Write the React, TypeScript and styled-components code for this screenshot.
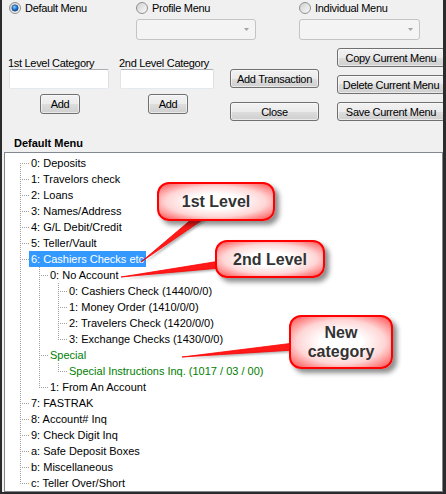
import React from "react";
import styled, { createGlobalStyle } from "styled-components";

const GlobalStyle = createGlobalStyle`
  html, body { margin: 0; padding: 0; background: #fff; }
  * { box-sizing: border-box; }
`;

const Window = styled.div`
  position: relative;
  width: 446px;
  height: 494px;
  background: #f0f0f0;
  border-left: 2px solid #2b2b2b;
  border-right: 3px solid #2b2b2b;
  border-bottom: 2px solid #2b2b2b;
  overflow: hidden;
  font-family: "Liberation Sans", Arial, sans-serif;
  font-size: 11px;
  color: #000;
  display: flex;
  flex-direction: column;
`;

const RadioRow = styled.div`
  display: flex;
  height: 16px;
  padding-left: 7px;
`;

const RadioItem = styled.div<{ $w?: number }>`
  display: flex;
  align-items: center;
  gap: 4px;
  width: ${(p) => (p.$w ? `${p.$w}px` : "auto")};
  letter-spacing: -0.3px;
  line-height: 16px;
  svg { flex-shrink: 0; }
`;

const ComboRow = styled.div`
  display: flex;
  gap: 43px;
  margin-top: 3px;
  padding-left: 134px;
`;

const Combo = styled.div<{ $w: number }>`
  width: ${(p) => p.$w}px;
  height: 21px;
  border: 1px solid #c4c4c4;
  border-radius: 3px;
  background: #f4f4f4;
  display: flex;
  align-items: center;
  justify-content: flex-end;
  padding-right: 6px;
`;

const Lower = styled.div`
  display: flex;
  margin-top: 8px;
  height: 73px;
  padding-left: 6px;
`;

const Column = styled.div<{ $w?: number; $top?: number; $gap?: number }>`
  display: flex;
  flex-direction: column;
  align-items: flex-start;
  width: ${(p) => (p.$w ? `${p.$w}px` : "auto")};
  flex-shrink: 0;
  padding-top: ${(p) => p.$top ?? 0}px;
  gap: ${(p) => p.$gap ?? 0}px;
`;

const FieldLabel = styled.div`
  line-height: 12px;
  height: 12px;
  letter-spacing: -0.3px;
  white-space: nowrap;
`;

const TextBox = styled.div<{ $w: number }>`
  width: ${(p) => p.$w}px;
  height: 20px;
  margin-left: 1px;
  background: #fff;
  border: 1px solid;
  border-color: #abadb3 #dbdfe6 #e3e9ef #e2e3ea;
  border-radius: 2px;
  margin-bottom: 5px;
`;

const Button = styled.div<{ $w: number; $h?: number; $ml?: number }>`
  width: ${(p) => p.$w}px;
  height: ${(p) => p.$h ?? 19}px;
  margin-left: ${(p) => p.$ml ?? 0}px;
  border: 1px solid #707070;
  border-radius: 3px;
  background: linear-gradient(#f2f2f2 0%, #ebebeb 50%, #dddddd 50%, #cfcfcf 100%);
  box-shadow: inset 0 0 0 1px rgba(255, 255, 255, 0.55);
  display: flex;
  align-items: center;
  justify-content: center;
  letter-spacing: -0.3px;
  white-space: nowrap;
  flex-shrink: 0;
`;

const TreeTitle = styled.div`
  margin-top: 16px;
  margin-bottom: 2px;
  padding-left: 12px;
  font-weight: bold;
  line-height: 13px;
  height: 13px;
`;

const TreeBox = styled.div`
  flex: 1;
  margin-left: 2px;
  background: #fff;
  border: 1px solid #828790;
  padding-top: 2px;
`;

const TreeRow = styled.div`
  display: flex;
  align-items: center;
  height: 16px;
  svg { display: block; flex-shrink: 0; }
`;

const NodeLabel = styled.span<{ $sel?: boolean; $green?: boolean }>`
  padding: 0 2px;
  height: 16px;
  line-height: 16px;
  white-space: nowrap;
  background: ${(p) => (p.$sel ? "#3399ff" : "transparent")};
  color: ${(p) => (p.$sel ? "#fff" : p.$green ? "#008000" : "#000")};
`;

const Pointers = styled.svg`
  position: absolute;
  left: -2px;
  top: 0;
  pointer-events: none;
`;

const Callout = styled.div<{ $x: number; $y: number; $w: number; $h: number }>`
  position: absolute;
  left: ${(p) => p.$x - 2}px;
  top: ${(p) => p.$y}px;
  width: ${(p) => p.$w}px;
  height: ${(p) => p.$h}px;
  border: 2px solid #ff0000;
  border-radius: 12px;
  background: radial-gradient(ellipse at center, #ffffff 0%, #ffffff 30%, #ffd6d6 62%, #ff7070 90%, #ff3030 100%);
  box-shadow: 4px 4px 5px rgba(0, 0, 0, 0.45);
  display: flex;
  align-items: center;
  justify-content: center;
  text-align: center;
  font-family: "Liberation Sans", Arial, sans-serif;
  font-weight: bold;
  font-size: 16px;
  line-height: 19px;
  color: #333;
`;

const Radio = ({ checked, id }: { checked?: boolean; id: string }) => (
  <svg width="12" height="12" viewBox="0 0 12 12">
    <defs>
      <linearGradient id={`${id}-r`} x1="0" y1="0" x2="1" y2="1">
        <stop offset="0" stopColor="#cfcfcf" />
        <stop offset="1" stopColor="#fbfbfb" />
      </linearGradient>
      <radialGradient id={`${id}-d`} cx="0.4" cy="0.35" r="0.7">
        <stop offset="0" stopColor="#8fd0ff" />
        <stop offset="0.5" stopColor="#2a7fd4" />
        <stop offset="1" stopColor="#0b3a78" />
      </radialGradient>
    </defs>
    <circle cx="6" cy="6" r="5.5" fill={`url(#${id}-r)`} stroke="#8e8f8f" />
    {checked && <circle cx="6" cy="6" r="3.2" fill={`url(#${id}-d)`} stroke="#1d4f8f" strokeWidth="0.6" />}
  </svg>
);

const ComboArrow = () => (
  <svg width="5" height="3" viewBox="0 0 5 3">
    <path d="M0 0h5L2.5 3z" fill="#a3a3a3" />
  </svg>
);

type Node = { label: string; green?: boolean; selected?: boolean; children?: Node[] };
type Row = { label: string; green?: boolean; selected?: boolean; depth: number; isLast: boolean; isFirst: boolean; guides: boolean[] };

const menu: Node[] = [
  { label: "0: Deposits" },
  { label: "1: Travelors check" },
  { label: "2: Loans" },
  { label: "3: Names/Address" },
  { label: "4: G/L Debit/Credit" },
  { label: "5: Teller/Vault" },
  {
    label: "6: Cashiers Checks etc",
    selected: true,
    children: [
      {
        label: "0: No Account",
        children: [
          { label: "0: Cashiers Check (1440/0/0)" },
          { label: "1: Money Order (1410/0/0)" },
          { label: "2: Travelers Check (1420/0/0)" },
          { label: "3: Exchange Checks (1430/0/0)" },
        ],
      },
      {
        label: "Special",
        green: true,
        children: [{ label: "Special Instructions Inq. (1017 / 03 / 00)", green: true }],
      },
      { label: "1: From An Account" },
    ],
  },
  { label: "7: FASTRAK" },
  { label: "8: Account# Inq" },
  { label: "9: Check Digit Inq" },
  { label: "a: Safe Deposit Boxes" },
  { label: "b: Miscellaneous" },
  { label: "c: Teller Over/Short" },
];

function flatten(nodes: Node[], depth: number, guides: boolean[], out: Row[]) {
  nodes.forEach((n, i) => {
    const isLast = i === nodes.length - 1;
    out.push({ label: n.label, green: n.green, selected: n.selected, depth, isLast, isFirst: depth === 0 && i === 0, guides });
    if (n.children) flatten(n.children, depth + 1, [...guides, !isLast], out);
  });
  return out;
}

const rows = flatten(menu, 0, [], []);
const LINE = "#a0a0a0";

const TreeLines = ({ row }: { row: Row }) => {
  const x0 = 15 + 19 * row.depth + 0.5;
  return (
    <svg width={24 + 19 * row.depth} height="16">
      {row.guides.map((g, a) =>
        g ? <line key={a} x1={15 + 19 * a + 0.5} y1="0" x2={15 + 19 * a + 0.5} y2="16" stroke={LINE} strokeDasharray="1 1" /> : null
      )}
      <line x1={x0} y1={row.isFirst ? 8 : 0} x2={x0} y2={row.isLast ? 9 : 16} stroke={LINE} strokeDasharray="1 1" />
      <line x1={x0 + 1.5} y1="8.5" x2={x0 + 8.5} y2="8.5" stroke={LINE} strokeDasharray="1 1" />
    </svg>
  );
};

export default function App() {
  return (
    <>
      <GlobalStyle />
      <Window>
        <RadioRow>
          <RadioItem $w={127}><Radio id="r1" checked />Default Menu</RadioItem>
          <RadioItem $w={163}><Radio id="r2" />Profile Menu</RadioItem>
          <RadioItem><Radio id="r3" />Individual Menu</RadioItem>
        </RadioRow>
        <ComboRow>
          <Combo $w={120}><ComboArrow /></Combo>
          <Combo $w={121}><ComboArrow /></Combo>
        </ComboRow>
        <Lower>
          <Column $w={111} $top={9}>
            <FieldLabel>1st Level Category</FieldLabel>
            <TextBox $w={100} />
            <Button $w={40} $h={20} $ml={32}>Add</Button>
          </Column>
          <Column $w={111} $top={9}>
            <FieldLabel>2nd Level Category</FieldLabel>
            <TextBox $w={94} />
            <Button $w={40} $h={20} $ml={29}>Add</Button>
          </Column>
          <Column $w={107} $top={21} $gap={14}>
            <Button $w={89}>Add Transaction</Button>
            <Button $w={89}>Close</Button>
          </Column>
          <Column $gap={8}>
            <Button $w={108}>Copy Current Menu</Button>
            <Button $w={108}>Delete Current Menu</Button>
            <Button $w={108}>Save Current Menu</Button>
          </Column>
        </Lower>
        <TreeTitle>Default Menu</TreeTitle>
        <TreeBox>
          {rows.map((r, i) => (
            <TreeRow key={i}>
              <TreeLines row={r} />
              <NodeLabel $sel={r.selected} $green={r.green}>{r.label}</NodeLabel>
            </TreeRow>
          ))}
        </TreeBox>

        <Pointers width="446" height="494" viewBox="0 0 446 494">
          <defs>
            <filter id="ps" x="-20%" y="-20%" width="140%" height="140%">
              <feGaussianBlur stdDeviation="1.2" />
            </filter>
          </defs>
          <g fill="rgba(0,0,0,0.3)" filter="url(#ps)" transform="translate(2 2)">
            <polygon points="193,218 205,218 141,262" />
            <polygon points="220,261 220,268 121,277" />
            <polygon points="294,343 294,350 182,357" />
          </g>
          <g fill="#ff1a1a" stroke="#ff0000" strokeWidth="0.8" strokeLinejoin="round">
            <polygon points="193,218 205,218 141,262" />
            <polygon points="220,261 220,268 121,277" />
            <polygon points="294,343 294,350 182,357" />
          </g>
        </Pointers>
        <Callout $x={157} $y={182} $w={118} $h={39}>1st Level</Callout>
        <Callout $x={215} $y={240} $w={110} $h={38}>2nd Level</Callout>
        <Callout $x={289} $y={315} $w={104} $h={54}>New<br />category</Callout>
      </Window>
    </>
  );
}
